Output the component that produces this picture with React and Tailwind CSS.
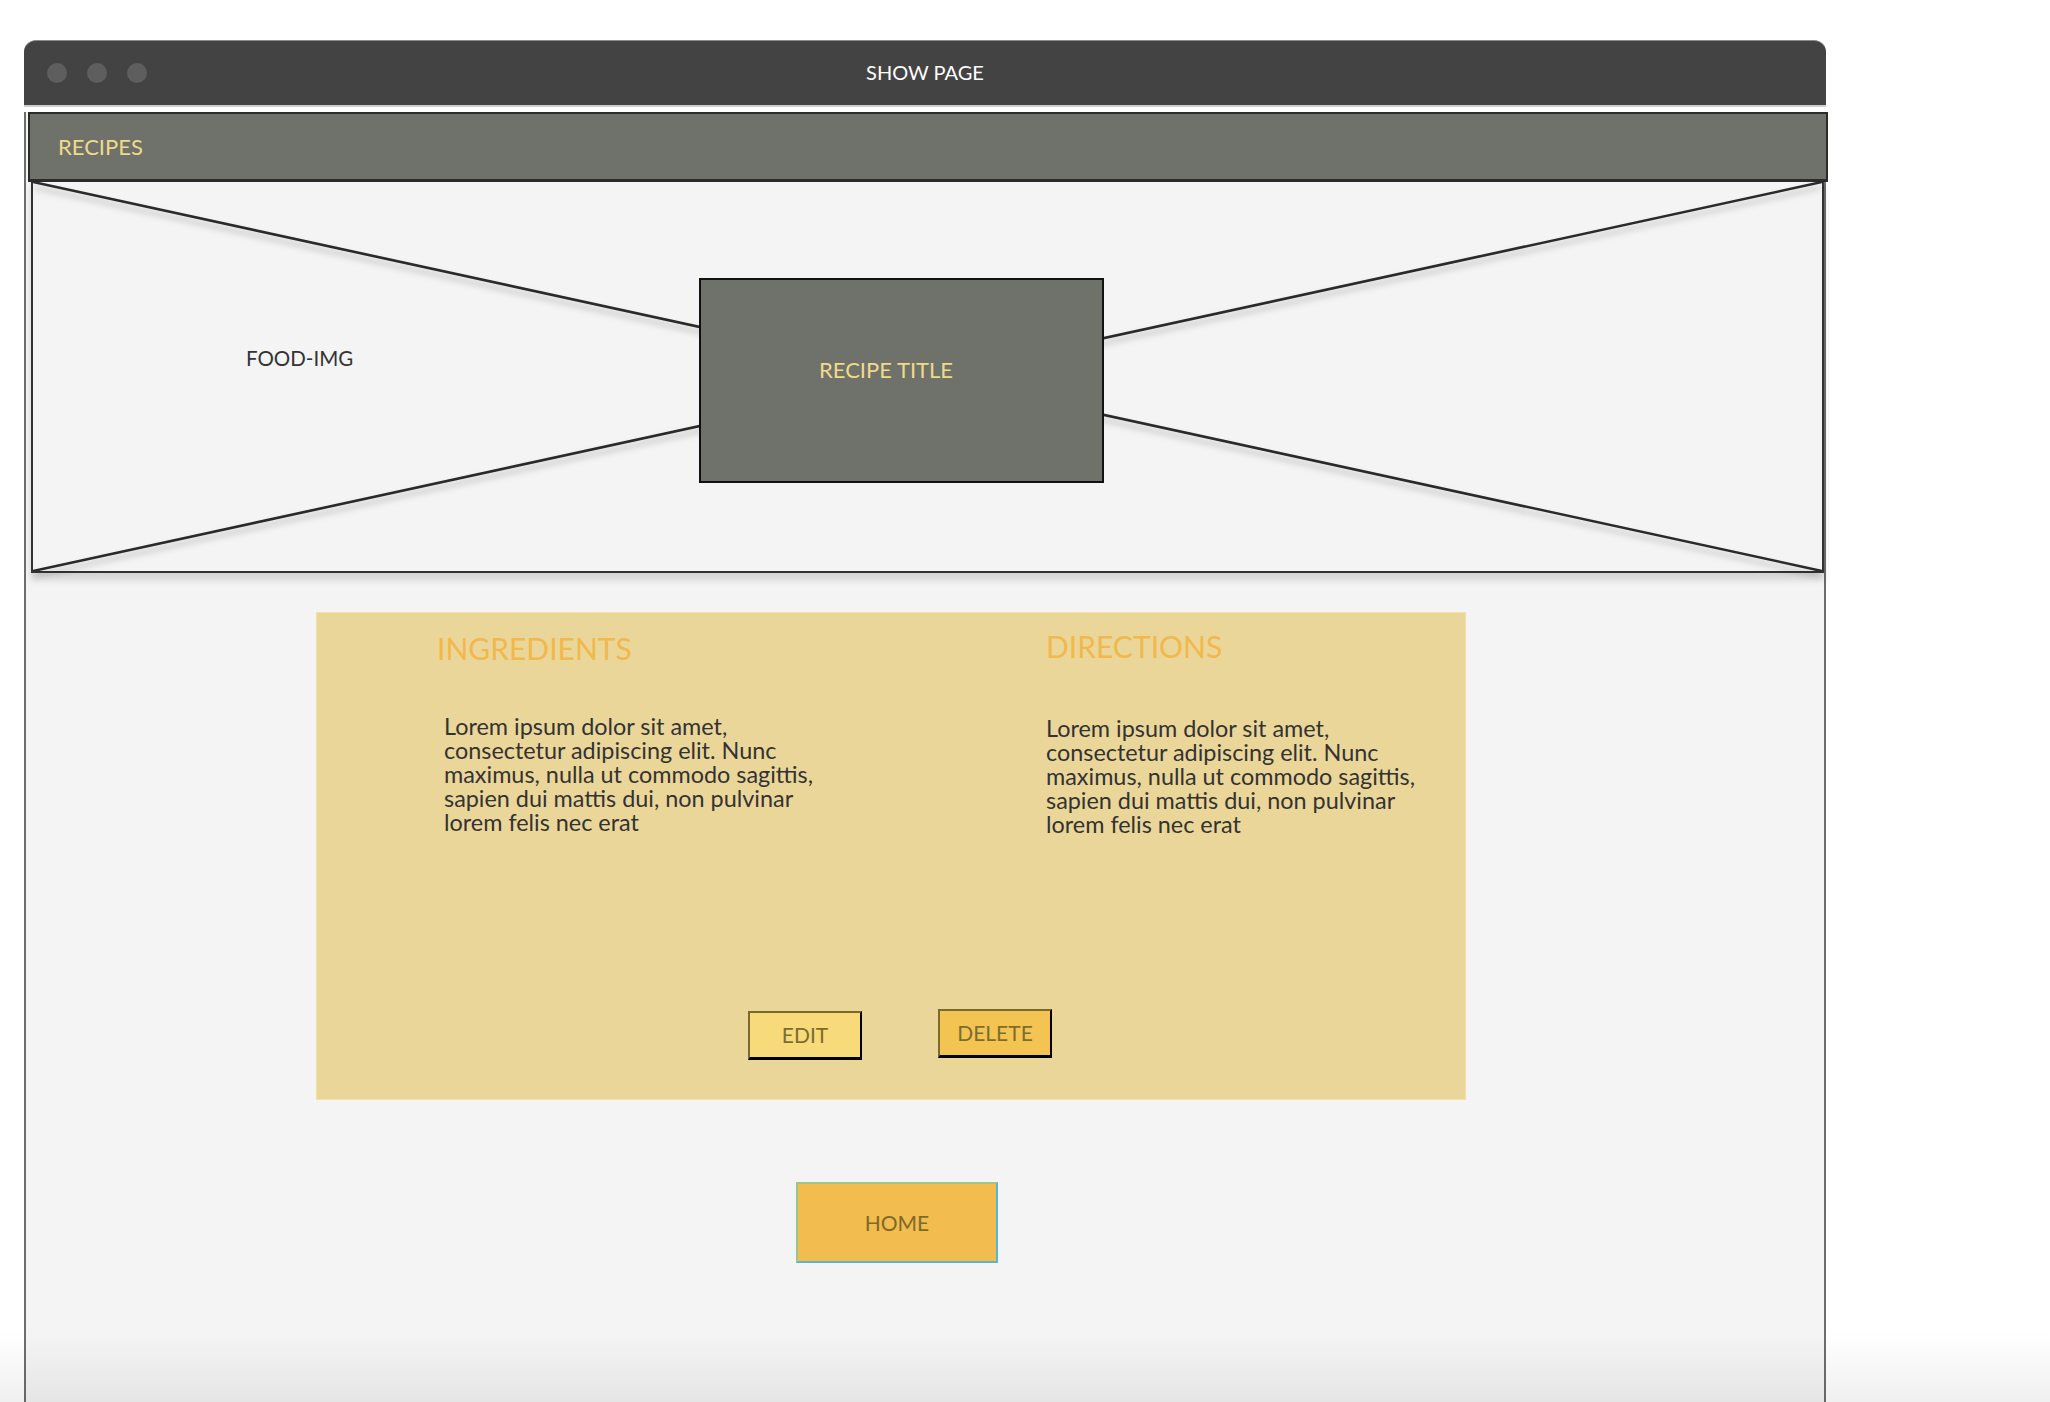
export default function App() {
  const lorem = [
    "Lorem ipsum dolor sit amet,",
    "consectetur adipiscing elit. Nunc",
    "maximus, nulla ut commodo sagittis,",
    "sapien dui mattis dui, non pulvinar",
    "lorem felis nec erat",
  ];
  const Para = ({ cls }) => (
    <div className={"text-[23.4px] leading-[24px] text-[#333333] whitespace-nowrap " + cls}>
      {lorem.map((l, i) => (
        <div key={i}>{l}</div>
      ))}
    </div>
  );
  return (
    <div
      className="relative w-[2050px] h-[1402px] bg-white overflow-hidden"
      style={{ fontFamily: "Lato, 'Open Sans', sans-serif" }}
    >
      <div className="ml-[24px] mt-[40px] w-[1802px] h-[1362px] flex flex-col">
        {/* title bar */}
        <div className="h-[65px] shrink-0 bg-[#434343] rounded-t-[12px] border-t border-[#8a8a8a] grid grid-cols-[1fr_auto_1fr] items-center">
          <div className="flex gap-[20px] pl-[23px]">
            <div className="w-[20px] h-[20px] rounded-full bg-[#5e5e5e]" />
            <div className="w-[20px] h-[20px] rounded-full bg-[#5e5e5e]" />
            <div className="w-[20px] h-[20px] rounded-full bg-[#5e5e5e]" />
          </div>
          <div className="text-white text-[20px] leading-[26px] mb-[2px]">SHOW PAGE</div>
          <div />
        </div>
        {/* body */}
        <div className="flex-1 flex flex-col border-x-2 border-[#6d6d6d] bg-[#f4f4f4]">
          <div className="h-[7px] bg-white border-t-2 border-[#cfcfcf] -mx-[2px]" />
          {/* nav */}
          <div className="ml-[2px] -mr-[4px] h-[70px] bg-[#6f716b] border-2 border-b-[3px] border-[#2b2b2b] pl-[28px] pt-[20px]">
            <div className="text-[#efda8a] text-[22px] leading-[26px]">RECIPES</div>
          </div>
          {/* image placeholder */}
          <div className="relative ml-[5px] h-[391px] border-x-2 border-b-2 border-[#333333] shadow-[0_7px_7px_rgba(0,0,0,0.13)]">
            <svg
              className="absolute inset-0 w-full h-full"
              viewBox="0 0 1000 1000"
              preserveAspectRatio="none"
              style={{ filter: "drop-shadow(0px 5px 3px rgba(0,0,0,0.25))" }}
            >
              <line x1="0" y1="0" x2="1000" y2="1000" stroke="#2a2a2a" strokeWidth="2.6" vectorEffect="non-scaling-stroke" />
              <line x1="0" y1="1000" x2="1000" y2="0" stroke="#2a2a2a" strokeWidth="2.6" vectorEffect="non-scaling-stroke" />
            </svg>
            <div className="relative grid grid-cols-[666px_405px]">
              <div className="pl-[213px] pt-[164px] text-[20.5px] leading-[24px] text-[#333333]">FOOD-IMG</div>
              <div className="mt-[96px] h-[205px] bg-[#6f716b] border-2 border-[#111111] pl-[118px] pt-[77px]">
                <div className="text-[#efda8a] text-[22px] leading-[26px]">RECIPE TITLE</div>
              </div>
            </div>
          </div>
          {/* yellow panel */}
          <div className="ml-[290px] mt-[39px] w-[1150px] h-[488px] bg-[#ebd699] border border-[#f3e0a2] flex flex-col">
            <div className="flex items-start">
              <div className="ml-[120px] w-[609px]">
                <div className="mt-[17px] text-[30px] leading-[36px] text-[#f1b84c]">INGREDIENTS</div>
                <Para cls="mt-[48px] ml-[7px]" />
              </div>
              <div>
                <div className="mt-[15px] text-[30px] leading-[36px] text-[#f1b84c]">DIRECTIONS</div>
                <Para cls="mt-[52px]" />
              </div>
            </div>
            <div className="mt-[173px] ml-[431px] flex items-start gap-[76px]">
              <div className="mt-[2px] w-[114px] h-[49px] bg-[#f7da7a] border-2 border-t-[#7b6a2c] border-l-[#7b6a2c] border-r-black border-b-[3px] border-b-black flex items-center justify-center text-[21px] text-[#7d6c2d]">
                EDIT
              </div>
              <div className="w-[114px] h-[49px] bg-[#f4c453] border-2 border-t-[#7b6a2c] border-l-[#7b6a2c] border-r-black border-b-[3px] border-b-black flex items-center justify-center text-[21px] text-[#7d6c2d]">
                DELETE
              </div>
            </div>
          </div>
          {/* home */}
          <div className="ml-[770px] mt-[82px] w-[202px] h-[81px] bg-[#f3bc4e] border-2 border-t-[#9cc48f] border-l-[#9cc48f] border-r-[#55b8d2] border-b-[#55b8d2] flex items-center justify-center text-[21px] text-[#7b6a2a]">
            HOME
          </div>
        </div>
      </div>
      <div className="absolute left-0 right-0 bottom-0 h-[70px] bg-gradient-to-b from-transparent to-black/[0.06] pointer-events-none" />
    </div>
  );
}
